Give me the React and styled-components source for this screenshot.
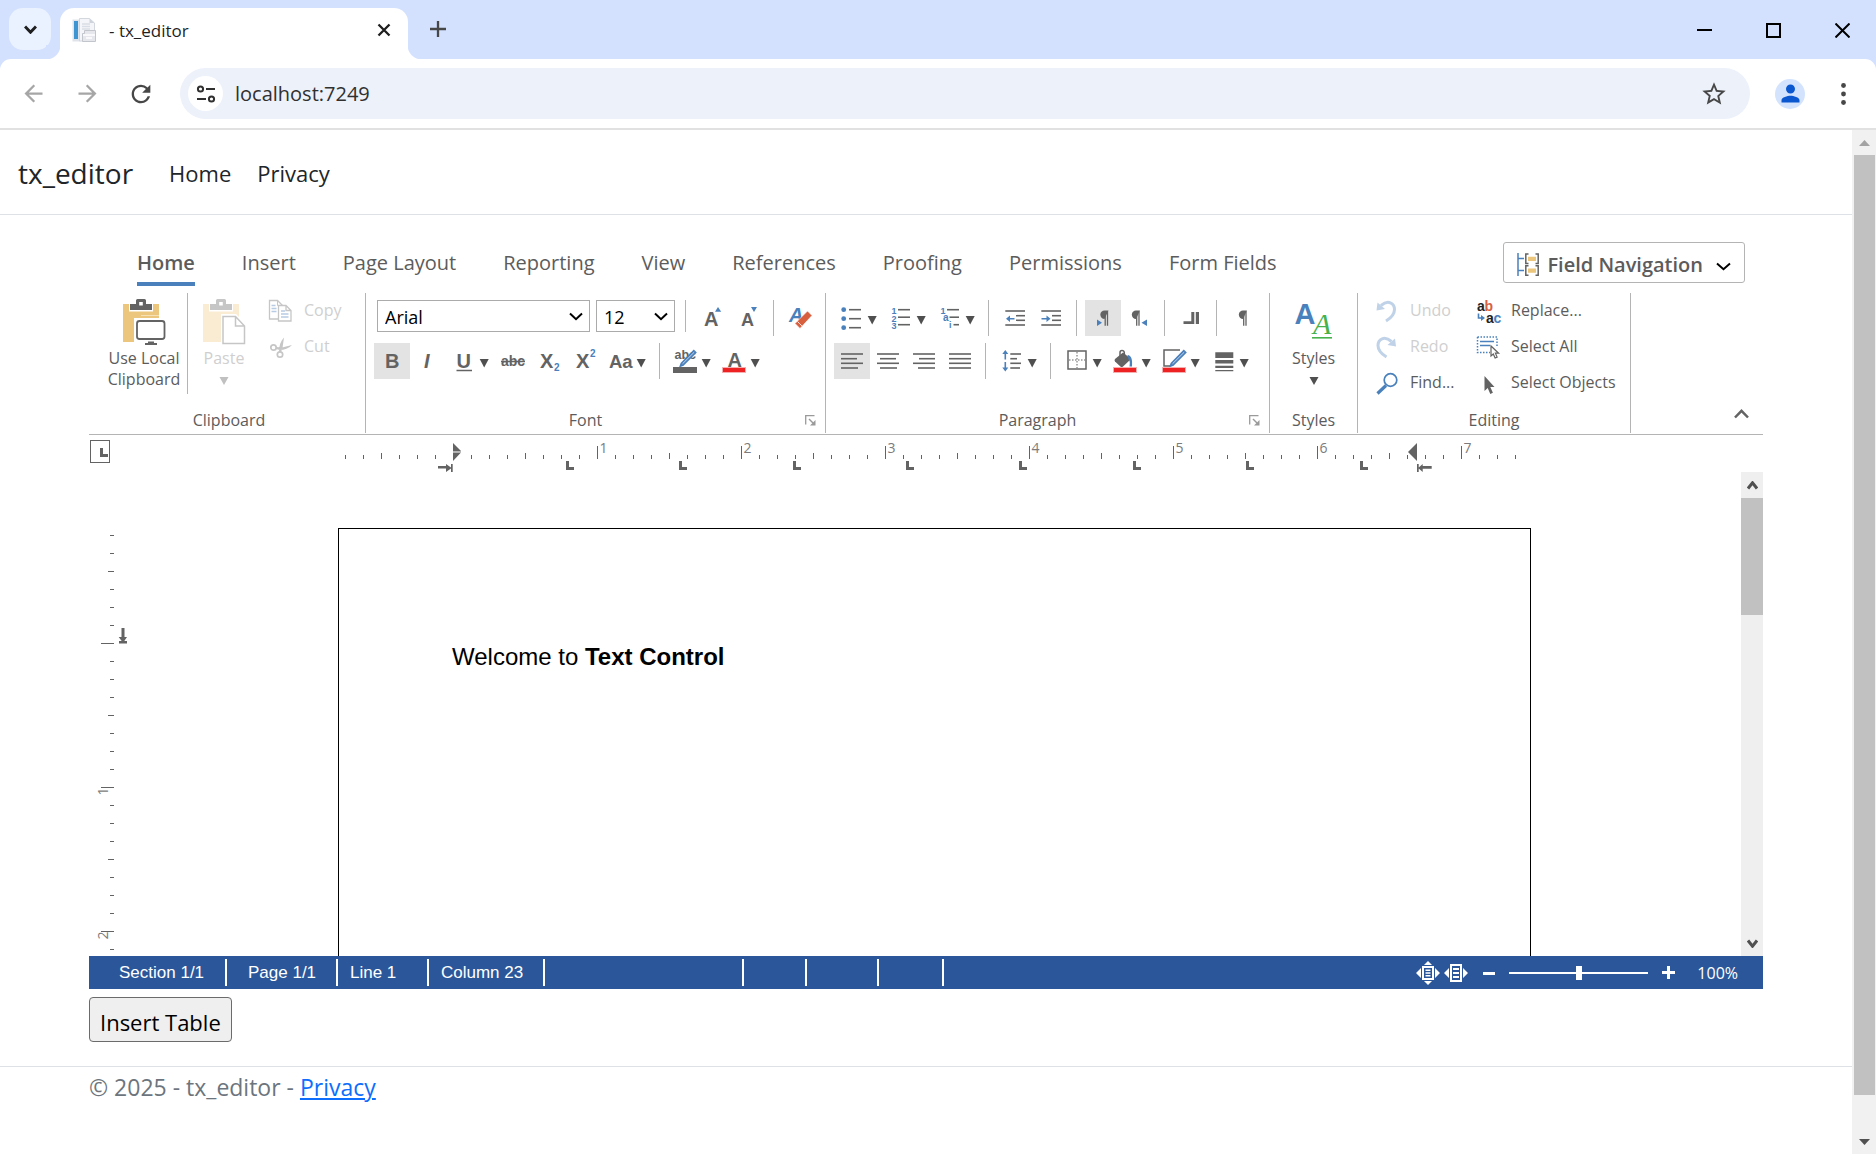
import React, {useState} from 'react';
import styled, {createGlobalStyle} from 'styled-components';
import {MdArrowBack, MdArrowForward, MdRefresh, MdStarBorder, MdPerson} from 'react-icons/md';

const GlobalStyle = createGlobalStyle`
  * {
    box-sizing: border-box;
  }
  body {
    margin: 0;
    background: #fff;
    font-family: 'Open Sans', 'Noto Sans', sans-serif;
    color: #212529;
  }
  button, select, input {
    font-family: inherit;
    margin: 0;
  }
  svg {
    display: block;
    flex: none;
  }
`

const GRAY = '#636363';
const BLUE = '#4a80bb';
const RED = '#ee2222';

/* ---------- browser window ---------- */

const Window = styled.div`
  display: flex;
  flex-direction: column;
  min-height: 100vh;
`

const TabStrip = styled.div`
  display: flex;
  height: 59px;
  padding: 8px 0 0 9px;
  background: #d3e1ff;
`

const PlainButton = styled.button`
  display: flex;
  align-items: center;
  justify-content: center;
  padding: 0;
  border: 0;
  background: none;
  color: ${props => props.$color || '#474747'};
`

const TabSearch = styled(PlainButton)`
  width: 42px;
  height: 42px;
  border-radius: 14px;
  background: #ebf2ff;
`

const BrowserTab = styled.div`
  position: relative;
  display: flex;
  align-items: center;
  width: 348px;
  height: 51px;
  margin-left: 9px;
  padding: 0 17px 7px 12px;
  border-radius: 14px 14px 0 0;
  background: #fff;
  font-size: 17px;
  color: #1f1f1f;

  &::before, &::after {
    content: '';
    position: absolute;
    bottom: 0;
    width: 14px;
    height: 14px;
  }
  &::before {
    left: -14px;
    background: radial-gradient(circle at 0 0, #d3e1ff 14px, #fff 15px);
  }
  &::after {
    right: -14px;
    background: radial-gradient(circle at 100% 0, #d3e1ff 14px, #fff 15px);
  }
`

const TabTitle = styled.span`
  flex: 1;
  padding-left: 13px;
`

const NewTab = styled(PlainButton)`
  width: 42px;
  height: 42px;
  margin-left: 9px;
`

const WindowButtons = styled.div`
  display: flex;
  margin-left: auto;
`

const WindowButton = styled(PlainButton)`
  width: 69px;
  height: 44px;
  padding-left: 2px;
`

const ToolbarBack = styled.div`
  background: #d3e1ff;
`

const Toolbar = styled.div`
  display: flex;
  align-items: center;
  height: 71px;
  padding: 0 15px;
  border-bottom: 2px solid #e1e1e1;
  border-radius: 11px 11px 0 0;
  background: #fff;
`

const NavButton = styled(PlainButton)`
  width: 36px;
  height: 36px;
  margin-right: 18px;
`

const AddressBar = styled.div`
  display: flex;
  flex: 1;
  align-items: center;
  height: 51px;
  margin: 0 16px 0 3px;
  padding: 0 22px 0 8px;
  border-radius: 26px;
  background: #ecf1fa;
`

const SiteInfo = styled(PlainButton)`
  width: 35px;
  height: 35px;
  border-radius: 50%;
  background: #fff;
`

const Address = styled.input`
  flex: 1;
  min-width: 0;
  padding: 0 12px;
  border: 0;
  outline: 0;
  background: none;
  font-size: 20px;
  color: #303030;
`

const Avatar = styled(PlainButton)`
  width: 48px;
  height: 48px;

  span {
    display: flex;
    align-items: center;
    justify-content: center;
    width: 30px;
    height: 30px;
    border-radius: 50%;
    background: #d3e3fd;
  }
`

const MenuButton = styled(PlainButton)`
  width: 36px;
  height: 36px;
  margin-left: 11px;
`

const Viewport = styled.div`
  display: flex;
  flex: 1;
`

const Site = styled.div`
  flex: 1;
  min-width: 0;
`

const PageScroll = styled.div`
  display: flex;
  flex-direction: column;
  align-items: center;
  width: 24px;
  background: #f1f1f1;
`

const ScrollArrow = styled(PlainButton)`
  width: 100%;
  height: ${props => props.$height}px;
`

const PageThumb = styled.div`
  flex: 1;
  width: 21px;
  margin-bottom: 34px;
  background: #c1c1c1;
`

/* ---------- site ---------- */

const SiteHeader = styled.header`
  display: flex;
  align-items: center;
  height: 85px;
  padding: 2px 18px 0;
  border-bottom: 1px solid #dee2e6;
`

const Brand = styled.a`
  margin-right: 36px;
  font-size: 28px;
  color: #212529;
  text-decoration: none;
`

const SiteLink = styled.a`
  margin-right: 26px;
  font-size: 22px;
  color: #212529;
  text-decoration: none;
`

const Main = styled.main`
  padding: 24px 89px;
`

const InsertTable = styled.button`
  height: 45px;
  margin-top: 8px;
  padding: 4px 10px 0;
  border: 1px solid #6b6b6b;
  border-radius: 4px;
  background: #efefef;
  font-size: 22px;
  color: #000;
`

const SiteFooter = styled.footer`
  padding: 0 89px;
  border-top: 1px solid #dee2e6;
  font-size: 23px;
  line-height: 40px;
  color: #6c757d;

  a {
    color: #0d6efd;
  }
`

/* ---------- ribbon ---------- */

const TabBar = styled.div`
  display: flex;
  align-items: flex-start;
  height: 54px;
  padding: 0 18px 0 48px;
`

const TabList = styled.div`
  display: flex;
  flex: 1;
  gap: 47px;
`

const RibbonTab = styled.button`
  height: 47px;
  padding: 4px 0 0;
  border: 0;
  border-bottom: 4px solid ${props => props.$active ? BLUE : 'transparent'};
  background: none;
  font-size: 20px;
  font-weight: ${props => props.$active ? 600 : 400};
  color: #5c5c5c;
  white-space: nowrap;
`

const FieldNavigation = styled.button`
  display: flex;
  align-items: center;
  gap: 8px;
  height: 41px;
  margin-top: 3px;
  padding: 3px 13px 0;
  border: 1px solid #b4b4b4;
  border-radius: 3px;
  background: #fff;
  font-size: 20px;
  font-weight: 600;
  color: #5c5c5c;
  white-space: nowrap;

  svg:last-child {
    margin: 5px 0 0 5px;
  }
`

const Ribbon = styled.div`
  display: flex;
  height: 142px;
  padding: 0 14px 1px 4px;
  border-bottom: 1px solid #b4b4b4;
`

const Group = styled.section`
  display: flex;
  flex: none;
  flex-direction: column;
  width: ${props => props.$width}px;
  border-right: 1px solid #b4b4b4;
`

const GroupBody = styled.div`
  display: flex;
  flex: 1;
  padding-left: ${props => props.$indent || 0}px;
`

const GroupLabel = styled.div`
  display: flex;
  align-items: center;
  height: 28px;
  padding-top: 2px;
  font-size: 16px;
  color: #5c5c5c;

  span {
    flex: 1;
    text-align: center;
  }
`

const Launcher = styled(PlainButton)`
  width: 20px;
  height: 18px;
  padding-right: 9px;
`

const BigButton = styled.button`
  display: flex;
  flex-direction: column;
  align-items: center;
  width: ${props => props.$width}px;
  padding: 5px 0 0;
  border: 0;
  background: none;
  font-size: 16px;
  line-height: 21px;
  color: #5c5c5c;

  span {
    margin-top: 2px;
  }
  &:disabled {
    color: #cfcfcf;
  }
`

const TallRule = styled.div`
  width: 1px;
  height: 101px;
  background: #b4b4b4;
`

const SmallColumn = styled.div`
  display: flex;
  flex-direction: column;
  width: ${props => props.$width}px;
  margin-left: ${props => props.$gap || 0}px;
`

const SmallButton = styled.button`
  display: flex;
  align-items: center;
  gap: 6px;
  height: 36px;
  padding: 0 0 2px;
  border: 0;
  background: none;
  font-size: 16px;
  color: #5c5c5c;
  white-space: nowrap;

  svg {
    margin-top: 2px;
  }
  &:disabled {
    color: #cfcfcf;
  }
`

const ToolRows = styled.div`
  display: flex;
  flex-direction: column;
  gap: 7px;
  padding: 7px 0 0 8px;
`

const ToolRow = styled.div`
  display: flex;
  height: 36px;
`

const ToolButton = styled.button`
  padding: 0;
  border: 0;
  background: ${props => props.$on ? '#e3e3e3' : 'none'};
`

const Rule = styled.div`
  width: 1px;
  height: ${props => props.$short ? 32 : 36}px;
  margin: 0 8px 0 ${props => props.$short ? 10 : 7}px;
  background: #b4b4b4;
`

const SelectBox = styled.label`
  display: grid;
  align-items: center;
  width: ${props => props.$width}px;
  height: 32px;
  margin-left: ${props => props.$gap}px;

  select, svg {
    grid-area: 1 / 1;
  }
  svg {
    justify-self: end;
    margin-right: 7px;
    pointer-events: none;
  }
`

const Select = styled.select`
  width: 100%;
  height: 32px;
  padding: 2px 7px 0;
  border: 1px solid #ababab;
  border-radius: 0;
  appearance: none;
  background: #fff;
  font-size: 18px;
  color: #000;
`

const Collapse = styled(PlainButton)`
  align-self: flex-end;
  width: 16px;
  height: 16px;
  margin: 0 0 11px auto;
`

/* ---------- document area ---------- */

const RulerRow = styled.div`
  display: grid;
  grid-template-columns: 39px 1fr 22px;
  justify-items: center;
  height: 37px;
`

const TabKind = styled(PlainButton)`
  justify-self: start;
  width: 20px;
  height: 23px;
  margin: 5px 0 0 1px;
  padding: 2px 0 0 7px;
  border: 1px solid #636363;
`

const DocumentArea = styled.div`
  display: grid;
  grid-template-columns: 39px 1fr 22px;
  height: 484px;
`

const Canvas = styled.div`
  display: flex;
  justify-content: center;
  overflow: hidden;
  padding-top: 56px;
`

const Paper = styled.div`
  flex: none;
  width: 1193px;
  padding: 112px 113px;
  border: 1px solid #000;
  border-bottom: 0;
  font-family: 'Liberation Sans', Arial, sans-serif;
  font-size: 24px;
  line-height: 32px;
  color: #000;
`

const DocScroll = styled.div`
  display: flex;
  flex-direction: column;
  justify-content: space-between;
  background: #efefef;
`

const DocThumb = styled.div`
  height: 117px;
  margin-bottom: auto;
  background: #c1c1c1;
`

const StatusBar = styled.div`
  display: flex;
  align-items: center;
  height: 33px;
  padding-right: 25px;
  background: #2b579a;
  color: #fff;
`

const StatusCell = styled.div`
  width: ${props => props.$width}px;
  height: 27px;
  padding-left: ${props => props.$indent || 0}px;
  border-right: 2px solid #fff;
  font-family: 'Liberation Sans', Arial, sans-serif;
  font-size: 17px;
  line-height: 27px;
  white-space: nowrap;
`

const Zoom = styled.div`
  display: flex;
  align-items: center;
  gap: 4px;
  margin-left: auto;
  font-size: 16px;
`

const ZoomStep = styled(PlainButton)`
  width: 33px;
  height: 24px;
`

const ZoomSlider = styled.input`
  width: 139px;
  height: 16px;
  appearance: none;
  background: linear-gradient(#fff, #fff) center / 100% 2px no-repeat;

  &::-webkit-slider-thumb {
    appearance: none;
    width: 6px;
    height: 14px;
    border-radius: 0;
    background: #fff;
  }
`

const ZoomValue = styled.span`
  padding-left: 8px;
`

/* ---------- icons ---------- */

const Icon = ({children, color}) => (
  <svg width="36" height="36" viewBox="0 0 36 36" fill={color || GRAY}>{children}</svg>
)

// wider icon with the drop-down arrow next to it
const SplitIcon = ({children}) => (
  <svg width="49" height="36" viewBox="0 0 49 36" fill={GRAY}>
    {children}
    <path d="M33.7 16h9l-4.5 8.5z" fill="#4f4f4f" />
  </svg>
)

const Letter = ({x, y, size, color, children, ...rest}) => (
  <text x={x} y={y} fontSize={size} fill={color || GRAY} fontFamily="Liberation Sans, Arial, sans-serif" fontWeight="bold" {...rest}>{children}</text>
)

const Lines = ({rows, color}) => (
  <g stroke={color || GRAY} strokeWidth="1.6">
    {rows.map(([x1, x2, y], i) => <path key={i} d={`M${x1} ${y}H${x2}`} />)}
  </g>
)

const ColorBar = ({color}) => (
  <rect x="5.5" y="24.5" width="23" height="5" fill={color} stroke={color === RED ? '#f4b0b0' : color} />
)

const Pilcrow = ({x}) => (
  <g transform={`translate(${x} 10.5)`}>
    <path d="M8 0H4A4 4 0 0 0 4 8.4z" />
    <path d="M4.7 .7V15.2M7 .7V15.2" stroke={GRAY} strokeWidth="1.3" fill="none" />
  </g>
)

const Pen = ({x}) => (
  <g transform={`translate(${x} 0)`}>
    <path d="M0 24.5l1.6-4.6L14.8 6.6l3 3L4.6 22.8z" fill={BLUE} />
    <path d="M3.5 20.8L15.2 9.2" stroke="#c4d6ea" strokeWidth="1" />
  </g>
)

const Chevron = ({width, height, up, color, weight}) => (
  <svg width={width} height={height} viewBox={`0 0 ${width} ${height}`} fill="none" stroke={color || '#000'} strokeWidth={weight || 2}>
    <path d={up
      ? `M1 ${height - 1.5}L${width / 2} 1.8L${width - 1} ${height - 1.5}`
      : `M1 1.5L${width / 2} ${height - 1.8}L${width - 1} 1.5`} />
  </svg>
)

const Triangle = ({up, color}) => (
  <svg width="11" height="6" viewBox="0 0 11 6" fill={color}>
    <path d={up ? 'M0 6L5.5 0L11 6z' : 'M0 0L5.5 6L11 0z'} />
  </svg>
)

const DownArrow = ({color}) => (
  <svg width="10" height="16" viewBox="0 0 10 16" fill={color}>
    <path d="M.5 8h9L5 16z" />
  </svg>
)

const Favicon = () => (
  <svg width="24" height="24" viewBox="0 0 24 24">
    <path d="M.5 1.5h8v22h-8z" fill="#dfe3ea" />
    <path d="M2 3h4v18H2z" fill="#3f95d2" />
    <path d="M7.5 .5h10l5 4.5v18h-15z" fill="#f4f5f8" stroke="#d3d7de" />
    <path d="M17.5 .5V5h5z" fill="#cfd4dc" />
    <path d="M10 6h8M10 8.5h8M10 11h8" stroke="#d9dde5" strokeWidth="1.5" />
    <path d="M12.5 12.5h11v11h-13v-8h2z" fill="#e6e7ec" stroke="#c2c5cc" />
    <path d="M11 17h12M14 20h6" stroke="#fff" strokeWidth="1.5" />
  </svg>
)

const TuneIcon = () => (
  <svg width="20" height="20" viewBox="0 0 20 20" fill="none" stroke="#303030" strokeWidth="2">
    <circle cx="4.5" cy="5" r="2.6" />
    <path d="M10 5h9M1 15h9" />
    <circle cx="15.5" cy="15" r="2.6" />
  </svg>
)

const ClipboardBase = ({dim}) => (
  <g>
    <rect x="3" y="6" width="36" height="38" fill={dim ? '#faebd3' : '#ecc67d'} />
    <path d="M9 4h6V0h12v4h6v9.5H9z" fill="#fff" />
    <path fillRule="evenodd" d="M10 6h6V2.500Q16 1 17.500 1h7Q26 1 26 2.500V6h6v6H10zM19.200 4v3.500h3.600V4z" fill={dim ? '#c6c6c6' : GRAY} />
  </g>
)

const LocalClipboardIcon = () => (
  <svg width="48" height="48" viewBox="0 0 48 48">
    <ClipboardBase />
    <path d="M14 20h34v28H14z" fill="#fff" />
    <path d="M21 17.5h18" stroke="#f6e0b5" />
    <rect x="17" y="23" width="27.5" height="18" rx="2.5" fill="#fff" stroke={GRAY} strokeWidth="1.8" />
    <path d="M28 43.5h6V45h3v2H25v-2h3z" fill={GRAY} />
  </svg>
)

const PasteIcon = () => (
  <svg width="48" height="48" viewBox="0 0 48 48">
    <ClipboardBase dim />
    <path d="M21 16h15l11 11v21H21z" fill="#fff" />
    <path d="M23 18.5h12.5L44.5 28v17.5H23zM35.5 18.5V28h9" fill="#fff" stroke="#c6c6c6" strokeWidth="1.5" />
  </svg>
)

const CopyIcon = () => (
  <Icon>
    <path d="M16 26H7.5V7.5h8l5 5" fill="none" stroke="#c6c6c6" strokeWidth="1.3" />
    <path d="M16.5 12.5H24l5 5V28H16.5zM24 12.5v5h5" fill="#fff" stroke="#c6c6c6" strokeWidth="1.3" />
    <path d="M9.5 12.5h4M9.5 15.5h5M9.5 18.5h5M19 18h4M19 21h7.5M19 24h7.5" stroke="#b7cbe4" strokeWidth="1.3" />
    <path d="M15.5 7.5v5h4" fill="none" stroke="#c6c6c6" />
  </Icon>
)

const CutIcon = () => (
  <Icon>
    <g fill="none" stroke="#c6c6c6" strokeWidth="1.7">
      <circle cx="11.5" cy="18.5" r="2.7" />
      <circle cx="18" cy="25.5" r="2.7" />
    </g>
    <path d="M17 23c0-6 1.5-11 5-14.5L20.5 19 19 23zM14 18l6 .5 10-2.5c-3 3.5-8 5-12 5l-4-1z" fill="#c6c6c6" />
  </Icon>
)

const StylesIcon = () => (
  <svg width="48" height="48" viewBox="0 0 48 48">
    <Letter x="4.5" y="25.5" size="29" color={BLUE}>A</Letter>
    <text x="23" y="36" fontSize="30" fontStyle="italic" fill="#47b14b" fontFamily="Liberation Serif, Times New Roman, serif">A</text>
    <path d="M22 39.8h20" stroke="#47b14b" strokeWidth="1.6" />
  </svg>
)

const CurvedArrow = ({flip}) => (
  <Icon>
    <g transform={flip ? 'translate(36.5 0) scale(-1 1)' : undefined}>
      <path d="M13 12.5C20 6.5 26.5 10 26.5 16.5C26.5 21.5 23 25 18 28" fill="none" stroke="#bfd2e8" strokeWidth="3" />
      <path d="M9.5 9.5l7.5 6.5-8.5 1.5z" fill="#bfd2e8" />
    </g>
  </Icon>
)

const FindIcon = () => (
  <Icon>
    <circle cx="22.5" cy="15" r="6.3" fill="none" stroke={BLUE} strokeWidth="1.7" />
    <path d="M18 20.5l-8.5 8" stroke={BLUE} strokeWidth="3.2" />
  </Icon>
)

const ReplaceIcon = () => (
  <Icon>
    <Letter x="8" y="18" size="14" color="#222">a</Letter>
    <Letter x="15.5" y="18" size="14" color="#d9603f">b</Letter>
    <Letter x="17" y="29.5" size="14" color="#222">a</Letter>
    <Letter x="24.5" y="29.5" size="14" color={BLUE}>c</Letter>
    <path d="M9.5 20.5V25h4" fill="none" stroke={BLUE} strokeWidth="1.6" />
    <path d="M12 22l4 3-4 3z" fill={BLUE} />
  </Icon>
)

const SelectAllIcon = () => (
  <Icon>
    <path d="M8.5 8H28v9M8.5 8v15.5H21" fill="none" stroke={BLUE} strokeWidth="1.5" strokeDasharray="1.5 1.5" />
    <path d="M11 12.5h14M11 16.5h10" stroke={BLUE} strokeWidth="1.5" />
    <path d="M22 17v10l2.3-2 1.8 4 2-.9-1.7-3.9h3.2z" fill="#fff" stroke={GRAY} strokeWidth="1.2" />
  </Icon>
)

const SelectObjectsIcon = () => (
  <Icon>
    <path d="M15.5 11v15l3.2-3 2.6 6 2.6-1.2-2.6-5.8h4.2z" />
  </Icon>
)

const FieldNavigationIcon = () => (
  <svg width="22" height="23" viewBox="0 0 22 23">
    <path d="M1 0v23M1 5.5h6M1 17.5h6" stroke={BLUE} strokeWidth="1.5" fill="none" />
    <path d="M11.5 1H8.8v9.5h2.7M18.5 1h2.7v9.5h-2.7M11.5 12.8H8.8v9.5h2.7M18.5 12.8h2.7v9.5h-2.7" fill="none" stroke={GRAY} strokeWidth="1.5" />
    <path d="M11 3.8h8V8h-8zM11 15.6h8v4.2h-8z" fill="#ecc67d" />
  </svg>
)

const LauncherIcon = () => (
  <svg width="11" height="11" viewBox="0 0 11 11">
    <path d="M.7 9.5V.7h8.8" fill="none" stroke="#9a9a9a" strokeWidth="1.3" />
    <path d="M4 4l4 4" stroke="#9a9a9a" strokeWidth="1.5" />
    <path d="M10.5 5v5.5H5z" fill="#9a9a9a" />
  </svg>
)

const FitPageIcon = () => (
  <svg width="24" height="24" viewBox="0 0 24 24" fill="#fff">
    <path d="M12 0l4 4H8zM12 24l4-4H8zM0 12l5-5v10zM24 12l-5-5v10z" />
    <path fillRule="evenodd" d="M6 5h12v14H6zM8 7v10h8V7z" />
    <path d="M9.5 8.5h5V10h-5zM9.5 11.3h5v1.5h-5zM9.5 14h5v1.5h-5z" />
  </svg>
)

const FitWidthIcon = () => (
  <svg width="24" height="24" viewBox="0 0 24 24" fill="#fff">
    <path d="M0 12l5-5v10zM24 12l-5-5v10z" />
    <path fillRule="evenodd" d="M6 3h12v18H6zM8 5v14h8V5z" />
    <path d="M9 7h6v2H9zM9 11h6v2H9zM9 15h6v2H9z" />
  </svg>
)

/* ---------- rulers ---------- */

const INCH = 144;
const STEP = 18;
const TAB_STOPS = [228, 341, 455, 568, 681, 795, 908, 1022];

const tickLength = (i) => {
  if (i % 8 === 0) return 13;
  if (i % 4 === 0) return 6;
  return 4;
}

const HorizontalRuler = () => {
  const zero = 115.5;
  const ticks = [];
  for (let i = -6; i <= 59; i++) {
    if (i !== 0) ticks.push(i);
  }
  return (
    <svg width="1193" height="40" viewBox="0 0 1193 40" fill={GRAY}>
      {ticks.map(i => <path key={i} d={`M${zero + i * STEP} 24v-${tickLength(i)}`} stroke={GRAY} />)}
      {[1, 2, 3, 4, 5, 6, 7].map(n => (
        <text key={n} x={zero + n * INCH + 2} y="18" fontSize="14" fill="#7c7c7c">{n}</text>
      ))}
      {TAB_STOPS.map(x => <path key={x} d={`M${x} 26h3v6h5v3h-8z`} />)}
      <path d="M115 8l8 8H115zM115 17.5h8L115 26z" />
      <path d="M115 16h8v1.5h-8z" fill="#b5b5b5" />
      <path d="M100 31h8v-2l5 3.500v-3.500h1.700v8H113v-3.500l-5 3.500v-3.500h-8z" />
      <path d="M1079 8v18l-9-9z" />
      <path d="M1079 29h1.700v3.500l4-3.500v2h9v2.700h-9V37l-4-3.500V37H1079z" />
    </svg>
  )
}

const VerticalRuler = () => {
  const zero = 171.5;
  const ticks = [];
  for (let i = -6; i <= 17; i++) {
    ticks.push(i);
  }
  return (
    <svg width="39" height="484" viewBox="0 0 39 484" fill={GRAY}>
      {ticks.map(i => <path key={i} d={`M25 ${zero + i * STEP}h-${tickLength(i)}`} stroke={GRAY} />)}
      {[1, 2].map(n => (
        <text key={n} transform={`translate(19 ${zero + n * INCH + 8}) rotate(-90)`} fontSize="14" fill="#7c7c7c">{n}</text>
      ))}
      <path d="M32.500 156h3v9H38l-2.700 4H38v2.500h-8V169h2.700l-3-4h2.800z" />
    </svg>
  )
}

/* ---------- ribbon groups ---------- */

const ClipboardGroup = () => (
  <Group $width={273}>
    <GroupBody $indent={8}>
      <BigButton $width={86}>
        <LocalClipboardIcon />
        <span>Use Local<br />Clipboard</span>
      </BigButton>
      <TallRule />
      <BigButton $width={72} disabled>
        <PasteIcon />
        <span>Paste</span>
        <DownArrow color="#c0c0c0" />
      </BigButton>
      <SmallColumn $gap={2}>
        <SmallButton disabled><CopyIcon />Copy</SmallButton>
        <SmallButton disabled><CutIcon />Cut</SmallButton>
      </SmallColumn>
    </GroupBody>
    <GroupLabel><span>Clipboard</span></GroupLabel>
  </Group>
)

const FontGroup = () => {
  const [font, setFont] = useState('Arial');
  const [size, setSize] = useState('12');
  const [bold, setBold] = useState(true);

  return (
    <Group $width={460}>
      <GroupBody>
        <ToolRows>
          <ToolRow>
            <SelectBox $width={213} $gap={3}>
              <Select aria-label="Font name" value={font} onChange={e => setFont(e.target.value)}>
                <option>Arial</option>
                <option>Calibri</option>
              </Select>
              <Chevron width={14} height={9} />
            </SelectBox>
            <SelectBox $width={79} $gap={6}>
              <Select aria-label="Font size" value={size} onChange={e => setSize(e.target.value)}>
                <option>12</option>
                <option>14</option>
              </Select>
              <Chevron width={14} height={9} />
            </SelectBox>
            <Rule $short />
            <ToolButton aria-label="Grow font">
              <Icon>
                <Letter x="10" y="26" size="20">A</Letter>
                <path d="M21 11.7h6.2L24 7z" fill={BLUE} />
              </Icon>
            </ToolButton>
            <ToolButton aria-label="Shrink font">
              <Icon>
                <Letter x="11" y="25.5" size="18">A</Letter>
                <path d="M21 7h6l-3 5z" fill={BLUE} />
              </Icon>
            </ToolButton>
            <Rule />
            <ToolButton aria-label="Clear formatting">
              <Icon>
                <Letter x="7" y="22" size="20" color={BLUE} fontStyle="italic">A</Letter>
                <path d="M25.5 11l4.500 4.500L18 28.500 13 23.500z" fill="#d9603f" stroke="#fff" strokeWidth=".6" />
                <path d="M15.5 21.5l4.5 4.5" stroke="#fff" strokeWidth=".8" />
              </Icon>
            </ToolButton>
          </ToolRow>
          <ToolRow>
            <ToolButton aria-label="Bold" $on={bold} onClick={() => setBold(!bold)}>
              <Icon><Letter x="11" y="25" size="20">B</Letter></Icon>
            </ToolButton>
            <ToolButton aria-label="Italic">
              <Icon><Letter x="14" y="25" size="20" fontStyle="italic">I</Letter></Icon>
            </ToolButton>
            <ToolButton aria-label="Underline">
              <SplitIcon>
                <Letter x="10.5" y="24.5" size="20">U</Letter>
                <path d="M10.5 27.5H26" stroke={GRAY} strokeWidth="1.5" />
              </SplitIcon>
            </ToolButton>
            <ToolButton aria-label="Strikethrough">
              <Icon>
                <Letter x="6" y="23" size="14">abc</Letter>
                <path d="M6 18.5h24" stroke={GRAY} strokeWidth="1.5" />
              </Icon>
            </ToolButton>
            <ToolButton aria-label="Subscript">
              <Icon>
                <Letter x="9" y="24.5" size="20">X</Letter>
                <Letter x="23" y="28" size="10" color={BLUE}>2</Letter>
              </Icon>
            </ToolButton>
            <ToolButton aria-label="Superscript">
              <Icon>
                <Letter x="9" y="24.5" size="20">X</Letter>
                <Letter x="23" y="14" size="10" color={BLUE}>2</Letter>
              </Icon>
            </ToolButton>
            <ToolButton aria-label="Change case">
              <SplitIcon><Letter x="6" y="24.5" size="18.5">Aa</Letter></SplitIcon>
            </ToolButton>
            <Rule />
            <ToolButton aria-label="Highlight color">
              <SplitIcon>
                <Letter x="6.5" y="16" size="12.5">abc</Letter>
                <Pen x={11} />
                <ColorBar color={GRAY} />
              </SplitIcon>
            </ToolButton>
            <ToolButton aria-label="Font color">
              <SplitIcon>
                <Letter x="10.5" y="24" size="20">A</Letter>
                <ColorBar color={RED} />
              </SplitIcon>
            </ToolButton>
          </ToolRow>
        </ToolRows>
      </GroupBody>
      <GroupLabel>
        <span>Font</span>
        <Launcher aria-label="Font settings"><LauncherIcon /></Launcher>
      </GroupLabel>
    </Group>
  )
}

const ParagraphGroup = () => (
  <Group $width={444}>
    <GroupBody>
      <ToolRows>
        <ToolRow>
          <ToolButton aria-label="Bullets">
            <SplitIcon>
              <g fill={BLUE}>
                <circle cx="9.7" cy="9.7" r="2.4" />
                <circle cx="9.7" cy="18.7" r="2.4" />
                <circle cx="9.7" cy="27.7" r="2.4" />
              </g>
              <Lines rows={[[15, 27, 9.7], [15, 27, 18.7], [15, 27, 27.7]]} />
            </SplitIcon>
          </ToolButton>
          <ToolButton aria-label="Numbering">
            <SplitIcon>
              <Letter x="8.5" y="14" size="9" color={BLUE}>1</Letter>
              <Letter x="8.5" y="21.5" size="9" color={BLUE}>2</Letter>
              <Letter x="8.5" y="29" size="9" color={BLUE}>3</Letter>
              <Lines rows={[[15, 27, 9.7], [15, 27, 17.2], [15, 27, 24.7]]} />
            </SplitIcon>
          </ToolButton>
          <ToolButton aria-label="Multilevel list">
            <SplitIcon>
              <Letter x="8.5" y="14" size="9" color={BLUE}>1</Letter>
              <Letter x="11" y="21" size="10" color={BLUE}>a</Letter>
              <Letter x="17" y="28" size="9" color={BLUE}>i</Letter>
              <Lines rows={[[15, 27, 9.7], [17.5, 27, 17.2], [21.5, 27, 24.7]]} />
            </SplitIcon>
          </ToolButton>
          <Rule />
          <ToolButton aria-label="Decrease indent">
            <Icon>
              <Lines rows={[[8.3, 28, 11], [19, 28, 15.7], [19, 28, 20.3], [8.3, 28, 25]]} />
              <path d="M9 18.7l4-3.2v2.4h4.5v1.6H13v2.4z" fill={BLUE} />
            </Icon>
          </ToolButton>
          <ToolButton aria-label="Increase indent">
            <Icon>
              <Lines rows={[[8.3, 28, 11], [19, 28, 15.7], [19, 28, 20.3], [8.3, 28, 25]]} />
              <path d="M17.5 18.7l-4-3.2v2.4h-5v1.6h5v2.4z" fill={BLUE} />
            </Icon>
          </ToolButton>
          <Rule />
          <ToolButton aria-label="Left to right" $on>
            <Icon>
              <Pilcrow x={15.5} />
              <path d="M12 19.5V26l5-3.2z" fill={BLUE} />
            </Icon>
          </ToolButton>
          <ToolButton aria-label="Right to left">
            <Icon>
              <Pilcrow x={11} />
              <path d="M26 19.5V26l-5.5-3.2z" fill={BLUE} />
            </Icon>
          </ToolButton>
          <Rule />
          <ToolButton aria-label="Tabs">
            <Icon><path d="M10.5 21.2h7.8V12h3v12H10.5zM22.8 12H26v12h-3.2z" /></Icon>
          </ToolButton>
          <Rule />
          <ToolButton aria-label="Control characters">
            <Icon><Pilcrow x={14} /></Icon>
          </ToolButton>
        </ToolRow>
        <ToolRow>
          <ToolButton aria-label="Align left" $on>
            <Icon><Lines rows={[[7, 29, 11], [7, 23, 15.7], [7, 29, 20.3], [7, 24, 25]]} /></Icon>
          </ToolButton>
          <ToolButton aria-label="Center">
            <Icon><Lines rows={[[7, 29, 11], [10, 26, 15.7], [7, 29, 20.3], [10, 27, 25]]} /></Icon>
          </ToolButton>
          <ToolButton aria-label="Align right">
            <Icon><Lines rows={[[7, 29, 11], [13, 29, 15.7], [7, 29, 20.3], [12, 29, 25]]} /></Icon>
          </ToolButton>
          <ToolButton aria-label="Justify">
            <Icon><Lines rows={[[7, 29, 11], [7, 29, 15.7], [7, 29, 20.3], [7, 29, 25]]} /></Icon>
          </ToolButton>
          <Rule />
          <ToolButton aria-label="Line spacing">
            <SplitIcon>
              <path d="M11.3 7l3 4h-2.2v5.5h-1.6V11H8.3zM11.3 28.500l3-4h-2.200V19h-1.600v5.500H8.300z" fill={BLUE} />
              <Lines rows={[[16.3, 27, 11], [16.3, 23, 15.7], [16.3, 27, 20.3], [16.3, 26, 25]]} />
            </SplitIcon>
          </ToolButton>
          <Rule />
          <ToolButton aria-label="Borders">
            <SplitIcon>
              <rect x="9" y="8" width="18" height="18" fill="none" stroke={GRAY} strokeWidth="1.5" />
              <path d="M18 9v16M10 17h16" stroke={GRAY} strokeDasharray="1.5 1.5" />
            </SplitIcon>
          </ToolButton>
          <ToolButton aria-label="Shading">
            <SplitIcon>
              <path d="M12 14V9.500q0-2 2-2t2.300 2V14" fill="none" stroke={GRAY} strokeWidth="1.5" />
              <path d="M15 9.500l8 6.500-8 7.500q-1.300 1-2.600 0L7 18.500q-1-1.200 0-2.400z" />
              <path d="M19.500 12c4 .5 5 4 4.500 11.500h-2.500c.5-4 .5-6-1-7z" fill={BLUE} />
              <ColorBar color={RED} />
            </SplitIcon>
          </ToolButton>
          <ToolButton aria-label="Border color">
            <SplitIcon>
              <path d="M23 7H7v16h6" fill="none" stroke={GRAY} strokeWidth="1.5" />
              <Pen x={12} />
              <ColorBar color={RED} />
            </SplitIcon>
          </ToolButton>
          <ToolButton aria-label="Border width">
            <SplitIcon>
              <path d="M9.3 9.3h18V15h-18zM9.3 17h18v3.5h-18zM9.3 22.7h18V25h-18zM9.3 27h18v1.3h-18z" />
            </SplitIcon>
          </ToolButton>
        </ToolRow>
      </ToolRows>
    </GroupBody>
    <GroupLabel>
      <span>Paragraph</span>
      <Launcher aria-label="Paragraph settings"><LauncherIcon /></Launcher>
    </GroupLabel>
  </Group>
)

const StylesGroup = () => (
  <Group $width={88}>
    <GroupBody>
      <BigButton $width={87}>
        <StylesIcon />
        <span>Styles</span>
        <DownArrow color="#4f4f4f" />
      </BigButton>
    </GroupBody>
    <GroupLabel><span>Styles</span></GroupLabel>
  </Group>
)

const EditingGroup = () => (
  <Group $width={273}>
    <GroupBody $indent={10}>
      <SmallColumn $width={101}>
        <SmallButton disabled><CurvedArrow />Undo</SmallButton>
        <SmallButton disabled><CurvedArrow flip />Redo</SmallButton>
        <SmallButton><FindIcon />Find...</SmallButton>
      </SmallColumn>
      <SmallColumn>
        <SmallButton><ReplaceIcon />Replace...</SmallButton>
        <SmallButton><SelectAllIcon />Select All</SmallButton>
        <SmallButton><SelectObjectsIcon />Select Objects</SmallButton>
      </SmallColumn>
    </GroupBody>
    <GroupLabel><span>Editing</span></GroupLabel>
  </Group>
)

const RIBBON_TABS = ['Home', 'Insert', 'Page Layout', 'Reporting', 'View', 'References', 'Proofing', 'Permissions', 'Form Fields'];

const Editor = () => {
  const [tab, setTab] = useState('Home');
  const [zoom, setZoom] = useState(50);

  return (
    <div>
      <TabBar>
        <TabList>
          {RIBBON_TABS.map(name => (
            <RibbonTab key={name} $active={name === tab} onClick={() => setTab(name)}>{name}</RibbonTab>
          ))}
        </TabList>
        <FieldNavigation>
          <FieldNavigationIcon />
          Field Navigation
          <Chevron width={15} height={9} />
        </FieldNavigation>
      </TabBar>

      <Ribbon>
        <ClipboardGroup />
        <FontGroup />
        <ParagraphGroup />
        <StylesGroup />
        <EditingGroup />
        <Collapse aria-label="Collapse ribbon"><Chevron width={15} height={10} up color={GRAY} weight={2.5} /></Collapse>
      </Ribbon>

      <RulerRow>
        <TabKind aria-label="Tab type">
          <svg width="8" height="9" viewBox="0 0 8 9"><path d="M0 0h3v6h5v3H0z" fill={GRAY} /></svg>
        </TabKind>
        <HorizontalRuler />
      </RulerRow>

      <DocumentArea>
        <VerticalRuler />
        <Canvas>
          <Paper>Welcome to <b>Text Control</b></Paper>
        </Canvas>
        <DocScroll>
          <ScrollArrow $height={26} aria-label="Scroll up"><Chevron width={11} height={9} up color="#505050" weight={3} /></ScrollArrow>
          <DocThumb />
          <ScrollArrow $height={26} aria-label="Scroll down"><Chevron width={11} height={9} color="#505050" weight={3} /></ScrollArrow>
        </DocScroll>
      </DocumentArea>

      <StatusBar>
        <StatusCell $width={138} $indent={30}>Section 1/1</StatusCell>
        <StatusCell $width={111} $indent={21}>Page 1/1</StatusCell>
        <StatusCell $width={91} $indent={12}>Line 1</StatusCell>
        <StatusCell $width={116} $indent={12}>Column 23</StatusCell>
        <StatusCell $width={199} />
        <StatusCell $width={63} />
        <StatusCell $width={72} />
        <StatusCell $width={65} />
        <Zoom>
          <PlainButton aria-label="Fit page"><FitPageIcon /></PlainButton>
          <PlainButton aria-label="Fit width"><FitWidthIcon /></PlainButton>
          <ZoomStep aria-label="Zoom out" onClick={() => setZoom(zoom - 5)}>
            <svg width="12" height="12" viewBox="0 0 12 12"><path d="M0 5h12v3H0z" fill="#fff" /></svg>
          </ZoomStep>
          <ZoomSlider type="range" aria-label="Zoom" value={zoom} onChange={e => setZoom(Number(e.target.value))} />
          <ZoomStep aria-label="Zoom in" onClick={() => setZoom(zoom + 5)}>
            <svg width="13" height="13" viewBox="0 0 13 13"><path d="M0 5h5V0h3v5h5v3H8v5H5V8H0z" fill="#fff" /></svg>
          </ZoomStep>
          <ZoomValue>100%</ZoomValue>
        </Zoom>
      </StatusBar>
    </div>
  )
}

const BrowserChrome = () => (
  <>
    <TabStrip>
      <TabSearch aria-label="Search tabs"><Chevron width={13} height={9} color="#1f1f1f" weight={3} /></TabSearch>
      <BrowserTab>
        <Favicon />
        <TabTitle>- tx_editor</TabTitle>
        <PlainButton aria-label="Close tab">
          <svg width="14" height="14" viewBox="0 0 14 14"><path d="M1.5 1.5l11 11M12.5 1.5l-11 11" stroke="#1f1f1f" strokeWidth="2.3" /></svg>
        </PlainButton>
      </BrowserTab>
      <NewTab aria-label="New tab">
        <svg width="16" height="16" viewBox="0 0 16 16"><path d="M8 0v16M0 8h16" stroke="#474747" strokeWidth="2.3" /></svg>
      </NewTab>
      <WindowButtons>
        <WindowButton aria-label="Minimize">
          <svg width="15" height="15" viewBox="0 0 15 15"><path d="M0 7h15" stroke="#000" strokeWidth="2" /></svg>
        </WindowButton>
        <WindowButton aria-label="Maximize">
          <svg width="15" height="15" viewBox="0 0 15 15"><rect x="1" y="1" width="13" height="13" fill="none" stroke="#000" strokeWidth="2" /></svg>
        </WindowButton>
        <WindowButton aria-label="Close">
          <svg width="15" height="15" viewBox="0 0 15 15"><path d="M.5 .5l14 14M14.5 .5l-14 14" stroke="#000" strokeWidth="2" /></svg>
        </WindowButton>
      </WindowButtons>
    </TabStrip>
    <ToolbarBack>
      <Toolbar>
        <NavButton $color="#a6a6a6" aria-label="Back"><MdArrowBack size={27} /></NavButton>
        <NavButton $color="#a6a6a6" aria-label="Forward"><MdArrowForward size={27} /></NavButton>
        <NavButton aria-label="Reload"><MdRefresh size={28} /></NavButton>
        <AddressBar>
          <SiteInfo aria-label="Site information"><TuneIcon /></SiteInfo>
          <Address aria-label="Address" defaultValue="localhost:7249" />
          <PlainButton aria-label="Bookmark"><MdStarBorder size={28} /></PlainButton>
        </AddressBar>
        <Avatar $color="#0b57d0" aria-label="Profile"><span><MdPerson size={27} /></span></Avatar>
        <MenuButton aria-label="Menu">
          <svg width="5" height="22" viewBox="0 0 5 22" fill="#474747">
            <circle cx="2.5" cy="2.5" r="2.4" />
            <circle cx="2.5" cy="11" r="2.4" />
            <circle cx="2.5" cy="19.5" r="2.4" />
          </svg>
        </MenuButton>
      </Toolbar>
    </ToolbarBack>
  </>
)

const App = () => {
  return (
    <Window>
      <GlobalStyle />
      <BrowserChrome />
      <Viewport>
        <Site>
          <SiteHeader>
            <Brand href="#">tx_editor</Brand>
            <SiteLink href="#">Home</SiteLink>
            <SiteLink href="#">Privacy</SiteLink>
          </SiteHeader>
          <Main>
            <Editor />
            <InsertTable>Insert Table</InsertTable>
          </Main>
          <SiteFooter>
            &copy; 2025 - tx_editor - <a href="#">Privacy</a>
          </SiteFooter>
        </Site>
        <PageScroll>
          <ScrollArrow $height={25} aria-label="Page up"><Triangle up color="#a3a3a3" /></ScrollArrow>
          <PageThumb />
          <ScrollArrow $height={25} aria-label="Page down"><Triangle color="#505050" /></ScrollArrow>
        </PageScroll>
      </Viewport>
    </Window>
  )
}
export default App;
